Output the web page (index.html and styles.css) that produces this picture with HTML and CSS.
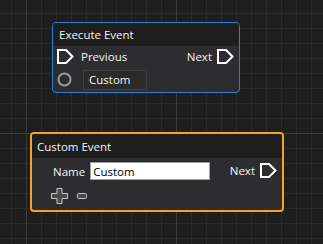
FILE: index.html
```html
<!DOCTYPE html>
<html lang="en">
<head>
    <meta charset="UTF-8">
    <title>Node Graph</title>
    <link rel="stylesheet" href="styles.css">
</head>
<body>
    <div id="canvas">
        <!-- Execute event node -->
        <div class="node node-execute">
            <div class="node-header">Execute Event</div>
            <div class="node-body">
                <div class="pin-row">
                    <div class="pin">
                        <svg class="exec-pin" width="17" height="15" viewBox="0 0 17 15"><path d="M1 1 H9 L15.5 7.5 L9 14 H1 Z"/></svg>
                        <span>Previous</span>
                    </div>
                    <div class="pin">
                        <span>Next</span>
                        <svg class="exec-pin" width="17" height="15" viewBox="0 0 17 15"><path d="M1 1 H9 L15.5 7.5 L9 14 H1 Z"/></svg>
                    </div>
                </div>
                <div class="pin-row">
                    <div class="pin">
                        <svg class="data-pin" width="15" height="15" viewBox="0 0 15 15"><circle cx="7.5" cy="7.5" r="6"/></svg>
                        <div class="value-box">Custom</div>
                    </div>
                </div>
            </div>
        </div>

        <!-- Custom event node -->
        <div class="node node-custom">
            <div class="node-header">Custom Event</div>
            <div class="node-body custom-body">
                <div class="custom-fields">
                    <div class="field">
                        <label>Name</label>
                        <input type="text" value="Custom">
                    </div>
                    <div class="param-buttons">
                        <svg width="17" height="16" viewBox="0 0 17 16"><path d="M6 0.5 H11 V5.5 H16.5 V10.5 H11 V15.5 H6 V10.5 H0.5 V5.5 H6 Z"/></svg>
                        <svg width="10" height="6" viewBox="0 0 10 6"><rect x="0.5" y="0.5" width="9" height="5" rx="1"/></svg>
                    </div>
                </div>
                <div class="pin">
                    <span>Next</span>
                    <svg class="exec-pin" width="17" height="15" viewBox="0 0 17 15"><path d="M1 1 H9 L15.5 7.5 L9 14 H1 Z"/></svg>
                </div>
            </div>
        </div>
    </div>
</body>
</html>
```

FILE: styles.css
```css
* {
    box-sizing: border-box;
    margin: 0;
    padding: 0;
}

body {
    font-family: "Open Sans", sans-serif;
    font-size: 11.5px;
    color: #f5f5f5;
    background-color: #1e1e1e;
}

/* Graph canvas with minor (15px) and major (150px) grid lines */
#canvas {
    position: relative;
    width: 323px;
    height: 244px;
    overflow: hidden;
    background-color: #1e1e1e;
    background-image:
        linear-gradient(to right, #3c3c3c 1px, transparent 1px),
        linear-gradient(to bottom, #3c3c3c 1px, transparent 1px),
        linear-gradient(to right, #2a2a2a 1px, transparent 1px),
        linear-gradient(to bottom, #2a2a2a 1px, transparent 1px);
    background-size: 150px 150px, 150px 150px, 15px 15px, 15px 15px;
    background-position: 26px 0, 0 133px, 11px 0, 0 13px;
}

/* Nodes */
.node {
    position: absolute;
    display: flex;
    flex-direction: column;
    background-color: #2d2d30;
    border-radius: 4px;
    overflow: hidden;
}

.node-header {
    background-color: #1e1e1e;
    display: flex;
    align-items: center;
}

.node-body {
    flex: 1;
}

.node-execute {
    left: 52px;
    top: 22px;
    width: 188px;
    height: 71px;
    border: 1px solid #2a7fd4;
}

.node-execute .node-header {
    height: 23px;
    padding-left: 6px;
}

.node-execute .node-body {
    display: flex;
    flex-direction: column;
    gap: 2px;
    padding: 0 5px 0 4px;
}

.node-custom {
    left: 30px;
    top: 132px;
    width: 254px;
    height: 80px;
    border: 2px solid #f5a422;
}

.node-custom .node-header {
    height: 24px;
    padding-left: 5px;
}

/* Pins */
.pin-row {
    display: flex;
    justify-content: space-between;
    align-items: center;
    height: 21px;
}

.pin {
    display: flex;
    align-items: center;
    gap: 5px;
}

.pin .exec-pin + span {
    margin-left: 2px;
}

.exec-pin path {
    fill: none;
    stroke: #ffffff;
    stroke-width: 2;
}

.data-pin circle {
    fill: none;
    stroke: #9a9a9a;
    stroke-width: 2;
}

.value-box {
    margin-left: 6px;
    width: 64px;
    height: 20px;
    padding-left: 5px;
    line-height: 18px;
    background-color: #2a2a2a;
    border: 1px solid #3e3e40;
}

/* Custom event body */
.custom-body {
    display: flex;
    justify-content: space-between;
    align-items: flex-start;
    padding: 4px 5px 0 21px;
}

.custom-body .pin {
    margin-top: 1px;
}

.field {
    display: flex;
    align-items: center;
    gap: 5px;
}

.field input {
    width: 120px;
    height: 18px;
    padding-left: 2px;
    font-family: "Open Sans", sans-serif;
    font-size: 11.5px;
    color: #000000;
    background-color: #ffffff;
    border: 1px solid #a0a0a0;
    outline: none;
}

.param-buttons {
    display: flex;
    align-items: center;
    gap: 9px;
    margin-top: 8px;
    margin-left: -2px;
}

.param-buttons path,
.param-buttons rect {
    fill: #4a4a4a;
    stroke: #c8c8c8;
    stroke-width: 1;
}
```
